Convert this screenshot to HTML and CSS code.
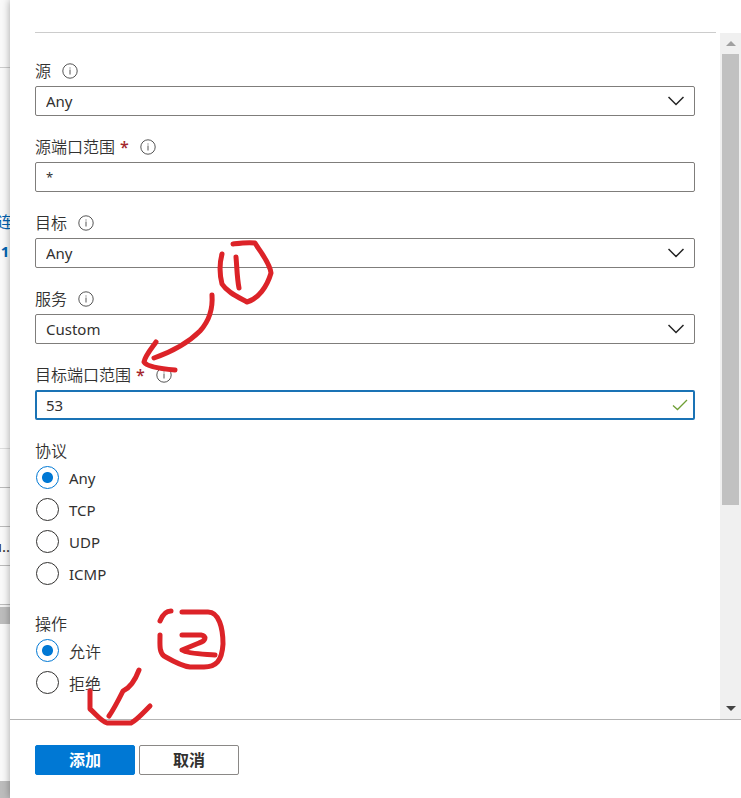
FILE: index.html
```html
<!DOCTYPE html>
<html lang="zh-CN">
<head>
  <meta charset="UTF-8" />
  <meta name="viewport" content="width=device-width, initial-scale=1.0"/>
  <title>添加入站安全规则</title>
  <link rel="stylesheet" href="styles.css">
</head>
<body>

  <!-- shared icons -->
  <svg class="icon-defs" aria-hidden="true">
    <symbol id="icon-info" viewBox="0 0 16 16">
      <circle cx="8" cy="8" r="7.2" fill="none" stroke="#555" stroke-width="1"/>
      <path d="M8 6.5V11.5M8 4.5V5.5" stroke="#555" stroke-width="1"/>
    </symbol>
    <symbol id="icon-chevron" viewBox="0 0 16 10">
      <path d="M0.5 1L8 8.5L15.5 1" fill="none" stroke="#222" stroke-width="1.5"/>
    </symbol>
    <symbol id="icon-check" viewBox="0 0 16 12">
      <path d="M1 6.5L5.5 10.5L15 1" fill="none" stroke="#6f9f35" stroke-width="1.3"/>
    </symbol>
  </svg>

  <aside class="backdrop">
    <div class="backdrop-head"></div>
    <div class="backdrop-info">
      <a href="#">连</a>
      <strong>1</strong>
    </div>
    <div class="backdrop-row"></div>
    <div class="backdrop-row"></div>
    <div class="backdrop-row">u..</div>
    <div class="backdrop-row"></div>
    <div class="backdrop-scroll"></div>
    <div class="backdrop-rest"></div>
    <div class="backdrop-foot"></div>
  </aside>

  <form class="panel">
    <header class="panel-header"></header>

    <div class="panel-body">
      <div class="fields">
        <div class="field">
          <div class="label-row">
            <label for="source">源</label>
            <svg class="info"><use href="#icon-info"/></svg>
          </div>
          <div class="control">
            <select id="source"><option>Any</option></select>
            <svg class="chevron"><use href="#icon-chevron"/></svg>
          </div>
        </div>

        <div class="field">
          <div class="label-row">
            <label for="source-port">源端口范围<span class="required">*</span></label>
            <svg class="info"><use href="#icon-info"/></svg>
          </div>
          <div class="control">
            <input type="text" id="source-port" class="wildcard" value="*">
          </div>
        </div>

        <div class="field">
          <div class="label-row">
            <label for="target">目标</label>
            <svg class="info"><use href="#icon-info"/></svg>
          </div>
          <div class="control">
            <select id="target"><option>Any</option></select>
            <svg class="chevron"><use href="#icon-chevron"/></svg>
          </div>
        </div>

        <div class="field">
          <div class="label-row">
            <label for="service">服务</label>
            <svg class="info"><use href="#icon-info"/></svg>
          </div>
          <div class="control">
            <select id="service"><option>Custom</option></select>
            <svg class="chevron"><use href="#icon-chevron"/></svg>
          </div>
        </div>

        <div class="field">
          <div class="label-row">
            <label for="target-port">目标端口范围<span class="required">*</span></label>
            <svg class="info"><use href="#icon-info"/></svg>
          </div>
          <div class="control">
            <input type="text" id="target-port" class="active" value="53">
            <svg class="check"><use href="#icon-check"/></svg>
          </div>
        </div>

        <div class="radio-group" role="radiogroup" aria-labelledby="protocol-title">
          <div class="label-row"><span id="protocol-title">协议</span></div>
          <label class="radio"><input type="radio" name="protocol" checked>Any</label>
          <label class="radio"><input type="radio" name="protocol">TCP</label>
          <label class="radio"><input type="radio" name="protocol">UDP</label>
          <label class="radio"><input type="radio" name="protocol">ICMP</label>
        </div>

        <div class="radio-group" role="radiogroup" aria-labelledby="action-title">
          <div class="label-row"><span id="action-title">操作</span></div>
          <label class="radio cjk"><input type="radio" name="action" checked>允许</label>
          <label class="radio cjk"><input type="radio" name="action">拒绝</label>
        </div>
      </div>

      <div class="scrollbar" aria-hidden="true">
        <div class="scroll-arrow"><svg viewBox="0 0 10 5"><path d="M0 5L5 0L10 5Z" fill="#a0a0a0"/></svg></div>
        <div class="scroll-track"><div class="scroll-thumb"></div></div>
        <div class="scroll-arrow"><svg viewBox="0 0 10 5"><path d="M0 0L5 5L10 0Z" fill="#444"/></svg></div>
      </div>
    </div>

    <footer class="panel-footer">
      <button type="button" class="btn primary">添加</button>
      <button type="button" class="btn">取消</button>
    </footer>
  </form>

  <!-- hand-drawn step marks -->
  <svg class="marks" width="300" height="740" aria-hidden="true">
    <path d="M222 254C219 265 220 276 222 284C227 292 238 297 247 302C258 299 267 287 271 273C270 263 261 253 255 243C248 242 241 243 233 244"/>
    <path d="M236 257C237 268 237 278 239 288"/>
    <path d="M212 295C213 309 210 320 200 331C189 342 171 352 154 358"/>
    <path d="M156 342C151 349 145 356 144 362C147 367 163 369 175 370"/>
    <path d="M160 621C162 616 165 611 171 611"/>
    <path d="M182 612H208C219 612 223 628 223 644C222 661 216 667 204 667H190C181 666 171 660 164 656C159 652 160 645 160 635"/>
    <path d="M182 635H201C207 636 206 641 199 643L182 650C188 654 203 654 215 655"/>
    <path d="M139 670C136 678 132 687 123 691C118 701 114 709 109 716"/>
    <path d="M90 691V709C96 714 101 721 107 723H131C137 720 143 713 150 706"/>
  </svg>

</body>
</html>
```
FILE: styles.css
```css
:root {
  --text: #323130;
  --border: #7f7d7b;
  --primary: #0078d4;
  --mark: #dc2328;
}

* {
  margin: 0;
  padding: 0;
  box-sizing: border-box;
  font-family: "Noto Sans", "Noto Sans CJK SC", sans-serif;
}

body {
  position: relative;
  display: flex;
  height: 100vh;
  overflow: hidden;
  background-color: #fff;
  color: var(--text);
  font-size: 15px;
}

.icon-defs {
  position: absolute;
  width: 0;
  height: 0;
}

/* page left visible behind the panel */
.backdrop {
  width: 10px;
  flex-shrink: 0;
  display: flex;
  flex-direction: column;
  overflow: hidden;
  background-color: #fafafa;
}

.backdrop-head {
  height: 68px;
  flex-shrink: 0;
  border-bottom: 1px solid #ccc;
}

.backdrop-info {
  height: 381px;
  flex-shrink: 0;
  padding-top: 142px;
  display: flex;
  flex-direction: column;
  align-items: center;
  gap: 5px;
  line-height: 24px;
  border-bottom: 1px solid #ddd;
  color: #0063b1;
}

.backdrop-info a {
  color: #0063b1;
  font-size: 16px;
  text-decoration: none;
}

.backdrop-row {
  height: 39px;
  flex-shrink: 0;
  display: flex;
  align-items: center;
  justify-content: flex-end;
  border-bottom: 1px solid #bbb;
}

.backdrop-scroll {
  height: 19px;
  flex-shrink: 0;
  border-top: 2px solid #f5f5f5;
  background-color: #bdbdbd;
}

.backdrop-rest {
  flex: 1;
}

.backdrop-foot {
  height: 17px;
  background-color: #bdbdbd;
}

.panel {
  position: relative;
  flex: 1;
  min-width: 0;
  display: flex;
  flex-direction: column;
  background-color: #fff;
  box-shadow: 0 0 8px rgba(0, 0, 0, 0.35);
}

.panel-header {
  height: 33px;
  margin: 0 25px;
  border-bottom: 1px solid #ccc;
}

.panel-body {
  flex: 1;
  min-height: 0;
  display: flex;
}

.fields {
  flex: 1;
  min-width: 0;
  padding: 27px 25px 0;
  overflow: hidden;
}

.field {
  margin-bottom: 20px;
}

.label-row {
  height: 22px;
  margin-bottom: 4px;
  display: flex;
  align-items: center;
  gap: 11px;
  font-size: 16px;
  line-height: 22px;
}

.label-row label,
.label-row span,
.cjk {
  font-family: "Noto Sans CJK SC", sans-serif;
  font-weight: 350;
}

.label-row label,
.radio-group .label-row span {
  padding-bottom: 2px;
}

.label-row .required {
  margin-left: 5px;
  color: #a4262c;
  font-family: "Open Sans", sans-serif;
  font-weight: 600;
}

.info {
  width: 16px;
  height: 16px;
}

.control {
  display: grid;
  align-items: center;
}

.control > * {
  grid-area: 1 / 1;
}

.control input,
.control select {
  width: 100%;
  height: 30px;
  padding: 0 10px;
  border: 1px solid var(--border);
  border-radius: 2px;
  background-color: #fff;
  color: var(--text);
  font-size: 15px;
  outline: none;
  appearance: none;
}

.control input.wildcard {
  font-size: 13px;
}

.control input.active {
  padding: 0 9px;
  border: 2px solid #1a73b5;
}

.chevron,
.check {
  justify-self: end;
  pointer-events: none;
}

.chevron {
  width: 16px;
  height: 10px;
  margin-right: 11px;
}

.check {
  width: 16px;
  height: 12px;
  margin-right: 7px;
}

.radio-group {
  display: flex;
  flex-direction: column;
  align-items: flex-start;
  gap: 9px;
  margin-bottom: 28px;
}

.radio-group .label-row {
  margin-bottom: -5px;
}

.radio {
  height: 23px;
  display: flex;
  align-items: center;
  gap: 10px;
}

.radio.cjk {
  font-size: 16px;
}

.radio input {
  width: 23px;
  height: 23px;
  margin-left: 1px;
  border: 1px solid #323130;
  border-radius: 50%;
  background-color: #fff;
  appearance: none;
}

.radio input:checked {
  border-color: var(--primary);
  background: radial-gradient(circle, var(--primary) 5px, #fff 6px);
}

.scrollbar {
  width: 21px;
  display: flex;
  flex-direction: column;
  background-color: #f0f0f0;
}

.scroll-arrow {
  height: 21px;
  display: flex;
  align-items: center;
  justify-content: center;
}

.scroll-arrow svg {
  width: 10px;
  height: 5px;
}

.scroll-track {
  flex: 1;
  padding: 0 2px;
}

.scroll-thumb {
  height: 70%;
  background-color: #c1c1c1;
}

.panel-footer {
  height: 79px;
  display: flex;
  align-items: center;
  gap: 4px;
  padding: 2px 25px 0;
  border-top: 1px solid #b3b3b3;
}

.btn {
  width: 100px;
  height: 30px;
  padding-bottom: 2px;
  border: 1px solid #8a8886;
  border-radius: 2px;
  background-color: #fff;
  color: var(--text);
  font-size: 16px;
  font-weight: 600;
  cursor: pointer;
}

.btn.primary {
  border-color: var(--primary);
  background-color: var(--primary);
  color: #fff;
}

.marks {
  position: absolute;
  left: 0;
  top: 0;
  pointer-events: none;
  fill: none;
  stroke: var(--mark);
  stroke-width: 5;
  stroke-linecap: round;
  stroke-linejoin: round;
}
```
